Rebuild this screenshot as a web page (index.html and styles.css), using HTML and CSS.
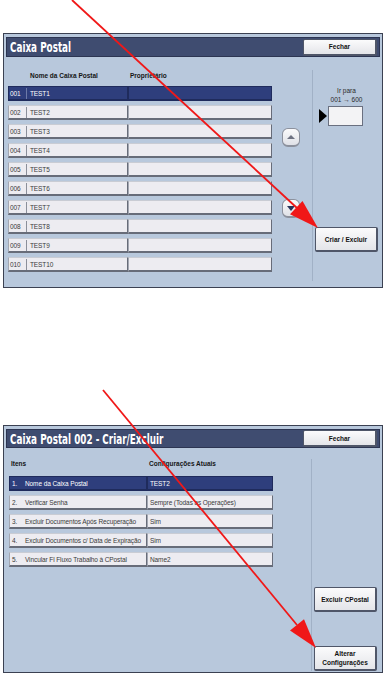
FILE: index.html
```html
<!DOCTYPE html>
<html lang="pt">
<head>
    <meta charset="UTF-8">
    <meta name="viewport" content="width=device-width, initial-scale=1.0">
    <title>Caixa Postal</title>
    <link rel="stylesheet" href="styles.css">
</head>
<body>

<div class="page">

    <!-- Tela 1: lista de caixas postais -->
    <section class="screen screen-list">
        <header class="bar">
            <h1>Caixa Postal</h1>
            <button class="btn btn-close">Fechar</button>
        </header>
        <div class="body">
            <div class="list">
                <div class="list-head">
                    <span class="h-name">Nome da Caixa Postal</span>
                    <span class="h-owner">Proprietário</span>
                </div>
                <div class="rows">
                    <div class="row selected"><div class="box box-main"><span class="num">001</span><span class="name">TEST1</span></div><div class="box box-owner"></div></div>
                    <div class="row"><div class="box box-main"><span class="num">002</span><span class="name">TEST2</span></div><div class="box box-owner"></div></div>
                    <div class="row"><div class="box box-main"><span class="num">003</span><span class="name">TEST3</span></div><div class="box box-owner"></div></div>
                    <div class="row"><div class="box box-main"><span class="num">004</span><span class="name">TEST4</span></div><div class="box box-owner"></div></div>
                    <div class="row"><div class="box box-main"><span class="num">005</span><span class="name">TEST5</span></div><div class="box box-owner"></div></div>
                    <div class="row"><div class="box box-main"><span class="num">006</span><span class="name">TEST6</span></div><div class="box box-owner"></div></div>
                    <div class="row"><div class="box box-main"><span class="num">007</span><span class="name">TEST7</span></div><div class="box box-owner"></div></div>
                    <div class="row"><div class="box box-main"><span class="num">008</span><span class="name">TEST8</span></div><div class="box box-owner"></div></div>
                    <div class="row"><div class="box box-main"><span class="num">009</span><span class="name">TEST9</span></div><div class="box box-owner"></div></div>
                    <div class="row"><div class="box box-main"><span class="num">010</span><span class="name">TEST10</span></div><div class="box box-owner"></div></div>
                </div>
            </div>
            <div class="scroll">
                <button class="nav nav-up"><span class="tri-up"></span></button>
                <button class="nav nav-down"><span class="tri-down"></span></button>
            </div>
            <aside class="side">
                <div class="goto">
                    <div class="goto-label">Ir para</div>
                    <div class="goto-range">001 &rarr; 600</div>
                    <div class="goto-input">
                        <span class="pointer"></span>
                        <span class="field"></span>
                    </div>
                </div>
                <button class="btn btn-action btn-create">Criar / Excluir</button>
            </aside>
        </div>
    </section>

    <!-- Tela 2: configuração da caixa 002 -->
    <section class="screen screen-edit">
        <header class="bar">
            <h1>Caixa Postal 002 - Criar/Excluir</h1>
            <button class="btn btn-close">Fechar</button>
        </header>
        <div class="body">
            <div class="list list-edit">
                <div class="list-head">
                    <span class="h-items">Itens</span>
                    <span class="h-current">Configurações Atuais</span>
                </div>
                <div class="rows">
                    <div class="row selected"><div class="box box-main"><span class="idx">1.</span><span class="item">Nome da Caixa Postal</span></div><div class="box box-value">TEST2</div></div>
                    <div class="row"><div class="box box-main"><span class="idx">2.</span><span class="item">Verificar Senha</span></div><div class="box box-value">Sempre (Todas as Operações)</div></div>
                    <div class="row"><div class="box box-main"><span class="idx">3.</span><span class="item">Excluir Documentos Após Recuperação</span></div><div class="box box-value">Sim</div></div>
                    <div class="row"><div class="box box-main"><span class="idx">4.</span><span class="item">Excluir Documentos c/ Data de Expiração</span></div><div class="box box-value">Sim</div></div>
                    <div class="row"><div class="box box-main"><span class="idx">5.</span><span class="item">Vincular Fl Fluxo Trabalho à CPostal</span></div><div class="box box-value">Name2</div></div>
                </div>
            </div>
            <aside class="side side-edit">
                <button class="btn btn-action btn-delete">Excluir CPostal</button>
                <button class="btn btn-action btn-change">Alterar<br>Configurações</button>
            </aside>
        </div>
    </section>

    <!-- setas vermelhas de indicação -->
    <svg class="arrows" width="386" height="678" viewBox="0 0 386 678">
        <line x1="72" y1="0" x2="297" y2="208" stroke="#f01818" stroke-width="1.8"/>
        <polygon points="318,228 290,214.2 302.5,201" fill="#f01818"/>
        <line x1="103" y1="390" x2="297" y2="625" stroke="#f01818" stroke-width="1.8"/>
        <polygon points="316,648 290,630.6 304,619.2" fill="#f01818"/>
    </svg>
</div>

</body>
</html>
```

FILE: styles.css
```css
body {
    margin: 0;
    padding: 0;
    background-color: #fff;
    font-family: "Liberation Sans", Arial, sans-serif;
}
.page {
    position: relative;
    width: 386px;
    height: 678px;
    padding-top: 33px;
    box-sizing: border-box;
}
.screen {
    margin: 0 3px;
    height: 255px;
    box-sizing: border-box;
    display: flex;
    flex-direction: column;
    background-color: #b8c8dc;
    border: 1px solid #3b4152;
    padding: 3px 2px 1px;
}
.screen-edit {
    margin-top: 137px;
    height: 248px;
}
.bar {
    height: 20px;
    box-sizing: border-box;
    display: flex;
    align-items: center;
    justify-content: space-between;
    background-color: #3f4c70;
    border: 1px solid #2c3552;
    padding: 0 2px 0 3px;
}
.bar h1 {
    margin: 0;
    color: #fff;
    font-family: "DejaVu Sans Condensed", "DejaVu Sans", sans-serif;
    font-size: 14px;
    font-weight: bold;
    white-space: nowrap;
    transform: scaleX(0.7);
    transform-origin: left center;
}
.btn {
    font-family: "Liberation Sans", Arial, sans-serif;
    font-size: 6.5px;
    font-weight: bold;
    color: #111;
    background: linear-gradient(#fbfbfc, #e4e5e9);
    border: 1px solid #4f5668;
    border-right-width: 2px;
    border-bottom-width: 2px;
    border-radius: 2px;
    padding: 0;
    cursor: pointer;
}
.btn-close {
    flex: none;
    width: 74px;
    height: 17px;
}
.body {
    flex: 1;
    display: flex;
}
.list {
    width: 264px;
    margin-left: 2px;
}
.list-head {
    height: 29px;
    box-sizing: border-box;
    padding-top: 15px;
    display: flex;
    font-size: 6.5px;
    font-weight: bold;
    line-height: 8px;
    color: #151515;
}
.h-name {
    padding-left: 22px;
    width: 100px;
}
.rows {
    display: flex;
    flex-direction: column;
    gap: 4px;
}
.row {
    display: flex;
    height: 15px;
}
.box {
    box-sizing: border-box;
    height: 15px;
    display: flex;
    align-items: center;
    white-space: nowrap;
    overflow: hidden;
    background-color: #edecf1;
    border: 1px solid #a3a7b2;
    border-top-color: #c9ccd4;
    border-right-color: #676c79;
    border-bottom: 2px solid #676c79;
    font-size: 6.5px;
    letter-spacing: -0.1px;
    color: #3a3a3a;
}
.box-main {
    width: 120px;
}
.box-owner {
    flex: 1;
}
.num {
    width: 18px;
    height: 11px;
    line-height: 11px;
    padding-left: 1px;
    box-sizing: border-box;
    border-right: 1px solid #8b8f9a;
}
.name {
    padding-left: 3px;
}
.row.selected .box {
    background-color: #2e3e7c;
    border-color: #1f2b5c;
    color: #fff;
}
.row.selected .num {
    border-right-color: #6d7aa8;
}
.scroll {
    width: 40px;
    box-sizing: border-box;
    padding: 71px 0 0 10px;
    display: flex;
    flex-direction: column;
    gap: 52px;
}
.nav {
    width: 18px;
    height: 19px;
    padding: 0;
    border: 1px solid #8c919d;
    border-bottom-width: 2px;
    border-radius: 6px;
    background: linear-gradient(#fafafb, #dfe1e7);
    display: flex;
    align-items: center;
    justify-content: center;
}
.tri-up {
    width: 0;
    height: 0;
    border-left: 4px solid transparent;
    border-right: 4px solid transparent;
    border-bottom: 4px solid #6e7282;
}
.tri-down {
    width: 0;
    height: 0;
    border-left: 4px solid transparent;
    border-right: 4px solid transparent;
    border-top: 5px solid #27345a;
}
.side {
    width: 68px;
    box-sizing: border-box;
    margin: 13px 0 5px;
    border-left: 1px solid #a1b1c6;
    display: flex;
    flex-direction: column;
}
.goto {
    padding-top: 17px;
    text-align: center;
    font-size: 6.5px;
    line-height: 8px;
    color: #2a2a2a;
}
.goto-range {
    margin-top: 1px;
}
.goto-input {
    display: flex;
    align-items: center;
    margin-top: 2px;
    padding-left: 6px;
    gap: 1px;
}
.pointer {
    width: 0;
    height: 0;
    border-top: 7px solid transparent;
    border-bottom: 7px solid transparent;
    border-left: 8px solid #000;
}
.field {
    width: 35px;
    height: 20px;
    box-sizing: border-box;
    background-color: #f3f3f5;
    border: 1px solid #6a7080;
}
.btn-action {
    width: 63px;
    height: 25px;
    margin-left: 2px;
}
.btn-create {
    margin-top: 101px;
}
.list-edit {
    margin-left: 3px;
}
.list-edit .list-head {
    height: 28px;
    padding-top: 12px;
}
.h-items {
    width: 138px;
    padding-left: 2px;
}
.list-edit .box-main {
    width: 138px;
}
.box-value {
    flex: 1;
    padding-left: 2px;
}
.idx {
    width: 15px;
    padding-left: 2px;
    box-sizing: border-box;
}
.side-edit {
    margin: 11px 0 0 38px;
}
.btn-delete {
    margin-top: 128px;
}
.btn-change {
    margin-top: 34px;
    line-height: 9px;
}
.arrows {
    position: absolute;
    top: 0;
    left: 0;
    pointer-events: none;
}
```
